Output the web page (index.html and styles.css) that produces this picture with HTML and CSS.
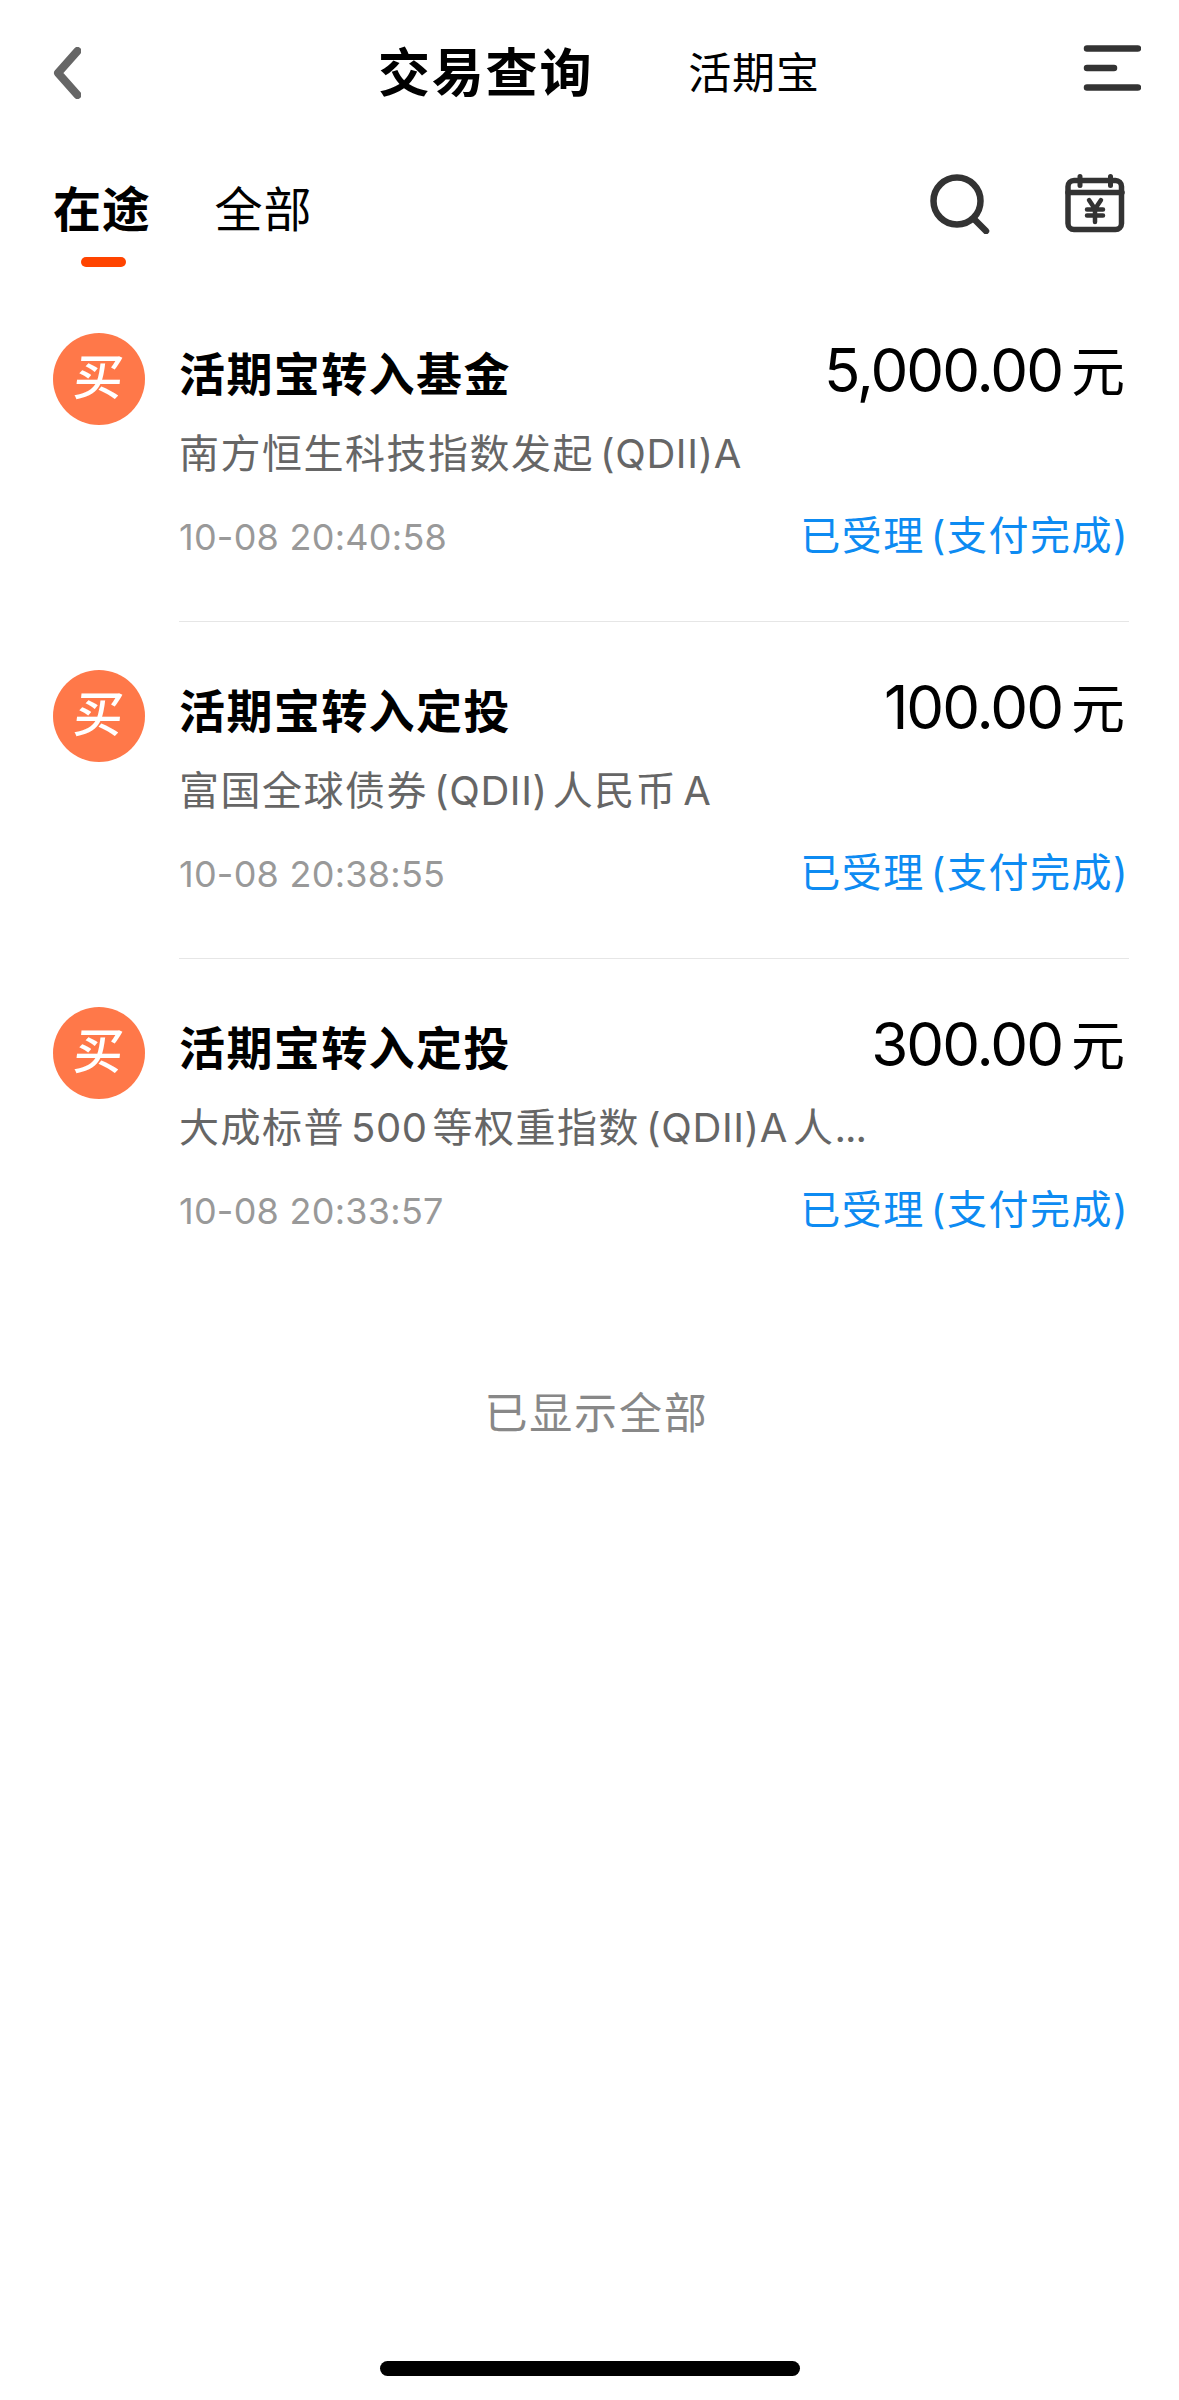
FILE: index.html
```html
<!DOCTYPE html>
<html lang="zh-CN">
  <head>
    <meta charset="UTF-8">
    <meta name="viewport" content="width=device-width, initial-scale=1.0">
    <title>交易查询</title>
    <link rel="stylesheet" href="styles.css">
  </head>
  <body>
    <header class="header">
      <svg class="back" width="28" height="52" viewBox="0 0 28 52">
        <path d="M24.500 4 L5 26 L24.500 48" />
      </svg>
      <h1 class="title">交易查询</h1>
      <span class="account">活期宝</span>
      <svg class="menu" width="58" height="46" viewBox="0 0 58 46">
        <path d="M4 3.500 H55 M4 23 H31 M4 42.500 H55" />
      </svg>
    </header>

    <nav class="tabs">
      <span class="tab active">在途</span>
      <span class="tab">全部</span>
      <svg class="search" width="60" height="60" viewBox="0 0 60 60">
        <circle cx="27" cy="27" r="23.500" />
        <path d="M45 46 L56 57" />
      </svg>
      <svg class="calendar" width="60" height="60" viewBox="0 0 60 60">
        <rect x="3" y="7.500" width="53.500" height="49" rx="6" />
        <path d="M3 19.500 H57" />
        <path class="ring" d="M15 3.500 V12.500 M45.500 3.500 V12.500" />
        <path class="yen" d="M24 27 L30 36 L36 27 M30 36 V49 M22 36.500 H38 M22 42.500 H38" />
      </svg>
    </nav>

    <main class="list">
      <section class="item">
        <div class="icon"><span>买</span></div>
        <div class="content">
          <div class="row top">
            <h2>活期宝转入基金</h2>
            <span class="amount">5,000.00<small>元</small></span>
          </div>
          <div class="fund">南方恒生科技指数发起<b class="open">(QDII)A</b></div>
          <div class="row bottom">
            <span class="date">10-08 20:40:58</span>
            <span class="status">已受理<b class="open">(</b>支付完成<b>)</b></span>
          </div>
        </div>
      </section>

      <section class="item">
        <div class="icon"><span>买</span></div>
        <div class="content">
          <div class="row top">
            <h2>活期宝转入定投</h2>
            <span class="amount">100.00<small>元</small></span>
          </div>
          <div class="fund">富国全球债券<b class="open close">(QDII)</b>人民币<b class="open">A</b></div>
          <div class="row bottom">
            <span class="date">10-08 20:38:55</span>
            <span class="status">已受理<b class="open">(</b>支付完成<b>)</b></span>
          </div>
        </div>
      </section>

      <section class="item">
        <div class="icon"><span>买</span></div>
        <div class="content">
          <div class="row top">
            <h2>活期宝转入定投</h2>
            <span class="amount">300.00<small>元</small></span>
          </div>
          <div class="fund">大成标普<b class="open close">500</b>等权重指数<b class="open close">(QDII)A</b>人<b class="dots">...</b></div>
          <div class="row bottom">
            <span class="date">10-08 20:33:57</span>
            <span class="status">已受理<b class="open">(</b>支付完成<b>)</b></span>
          </div>
        </div>
      </section>
    </main>

    <p class="end">已显示全部</p>
    <div class="home-bar"></div>
  </body>
</html>
```
FILE: styles.css
```css
* {
  box-sizing: border-box;
}

body {
  margin: 0;
  height: 2400px;
  display: flex;
  flex-direction: column;
  background-color: white;
  color: black;
  font-family: Inter, "Noto Sans CJK SC", sans-serif;
  text-autospace: no-autospace;
}

svg {
  fill: none;
  stroke: #333;
  stroke-width: 6.5px;
  stroke-linecap: round;
  stroke-linejoin: round;
}

h1, h2, p {
  margin: 0;
}

/* top bar */
.header {
  height: 146px;
  padding: 0 38px 0 53px;
  display: flex;
  align-items: center;
}

.back {
  stroke: #666;
  stroke-width: 8px;
}

.title {
  margin-left: 297px;
  padding-bottom: 7px;
  font-size: 52px;
  font-weight: 600;
  letter-spacing: 1.8px;
}

.account {
  margin-left: 95px;
  padding-bottom: 6px;
  font-size: 43px;
  letter-spacing: 0.9px;
}

.menu {
  margin-left: auto;
  margin-bottom: 11px;
}

/* tabs */
.tabs {
  height: 139px;
  padding: 0 54px 0 53px;
  display: flex;
}

.tab {
  height: 122px;
  margin-right: 64px;
  font-size: 48px;
  line-height: 127px;
  letter-spacing: 0.8px;
}

.active {
  font-weight: 700;
}

.active::after {
  content: "";
  display: block;
  width: 45px;
  height: 10px;
  margin: -16px 0 0 28px;
  border-radius: 5px;
  background-color: #ff4400;
}

.search {
  margin-left: auto;
  margin-top: 28px;
}

.calendar {
  margin-left: 75px;
  margin-top: 27px;
  stroke-width: 5.5px;
}

.calendar .ring {
  stroke-width: 5px;
}

.calendar .yen {
  stroke-width: 4.5px;
}

/* transactions */
.item {
  height: 337px;
  padding: 48px 50px 0 53px;
  display: flex;
}

.icon {
  width: 92px;
  height: 92px;
  margin-right: 34px;
  border-radius: 50%;
  background-color: #ff7849;
  color: white;
  font-size: 49px;
  font-weight: 500;
  line-height: 89px;
  text-align: center;
}

.icon span {
  display: inline-block;
  transform: skewX(-6deg);
}

.content {
  flex: 1;
  border-bottom: 1px solid #e6e6e6;
}

.item:last-child .content {
  border-bottom: none;
}

.row {
  display: flex;
  justify-content: space-between;
}

.top {
  height: 82px;
  padding-right: 4px;
  line-height: 83px;
}

h2 {
  font-size: 46px;
  font-weight: 700;
  letter-spacing: 1.4px;
}

.amount {
  font-size: 60px;
  line-height: 75px;
  letter-spacing: -2px;
}

.amount small {
  margin-left: 9px;
  font-size: 54px;
  letter-spacing: 0;
}

.fund {
  height: 76px;
  color: #666;
  font-size: 40px;
  line-height: 78px;
  letter-spacing: 1.5px;
}

b {
  font-weight: 400;
}

.fund b {
  letter-spacing: 0.6px;
}

.open {
  margin-left: 6px;
}

.close {
  margin-right: 5px;
}

.fund .dots {
  letter-spacing: -1px;
}

.bottom {
  line-height: 92px;
}

.date {
  color: #999;
  font-size: 36px;
  letter-spacing: 0.25px;
}

.status {
  color: #0d8bf2;
  font-size: 40px;
  line-height: 90px;
  letter-spacing: 1.5px;
}

.end {
  margin-top: 84px;
  padding-left: 14px;
  color: #888;
  font-size: 43px;
  line-height: 66px;
  letter-spacing: 1.8px;
  text-align: center;
}

.home-bar {
  width: 420px;
  height: 15px;
  margin: auto auto 24px;
  border-radius: 8px;
  background-color: black;
}
```
